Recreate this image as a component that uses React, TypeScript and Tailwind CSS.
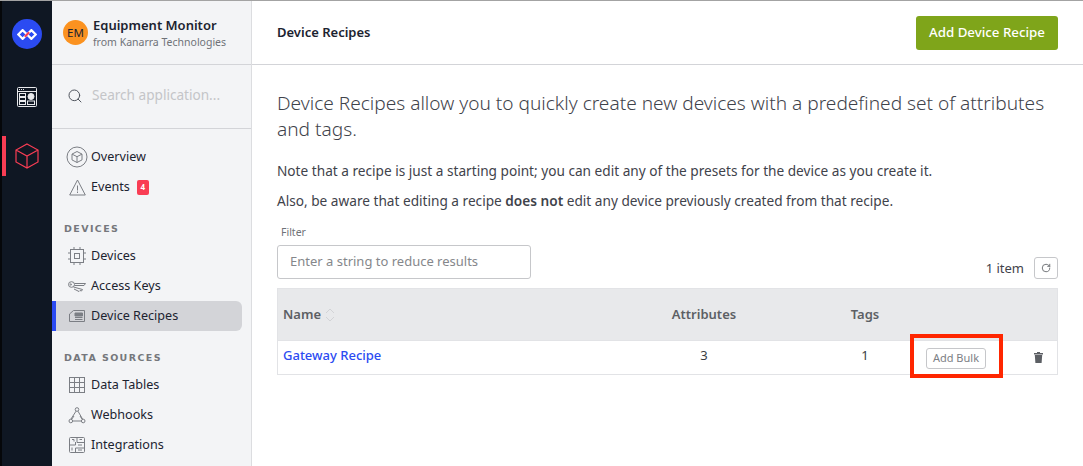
import { Search, RotateCw } from 'lucide-react'
import type { ReactNode } from 'react'

const FONT = "font-['Noto_Sans','Liberation_Sans',sans-serif]"
const ICON = '#7b7e84'

function IconOverview() {
  return (
    <svg width="22" height="22" viewBox="0 0 22 22" fill="none" stroke={ICON} strokeWidth="1">
      <circle cx="11" cy="11" r="10" />
      <path d="M11 5.500l5 2.600v5.800l-5 2.600-5-2.600V8.100zM6 8.100l5 2.600 5-2.600M11 10.700v5.800" />
    </svg>
  )
}

function IconEvents() {
  return (
    <svg width="17" height="17" viewBox="0 0 17 17" fill="none" stroke={ICON} strokeWidth="1">
      <path d="M8.500 1L.7 16h15.600z" />
      <path d="M8.500 6.500v5M8.500 12.500v1.500" />
    </svg>
  )
}

function IconDevices() {
  return (
    <svg width="18" height="18" viewBox="0 0 18 18" fill="none" stroke={ICON} strokeWidth="1">
      <rect x="2.500" y="2.500" width="13" height="13" />
      <rect x="6.500" y="6.500" width="5" height="5" />
      <path d="M6 0v2.500M12 0v2.500M6 15.500V18M12 15.500V18M0 6h2.500M0 12h2.500M15.500 6H18M15.500 12H18" />
    </svg>
  )
}

function IconKeys() {
  return (
    <svg width="18" height="11" viewBox="0 0 18 11" fill="none" stroke={ICON} strokeWidth="1">
      <ellipse cx="3.500" cy="3.500" rx="3" ry="2.800" />
      <path d="M6.500 2.500h11L16 4.500H6.500" />
      <path d="M5.500 6l9 2.500-1 1.500-1.500-.5-1 1-5-2.500" />
      <circle cx="2.800" cy="3.500" r=".7" />
    </svg>
  )
}

function IconRecipes() {
  return (
    <svg width="16" height="14" viewBox="0 0 16 14" fill="none" stroke={ICON} strokeWidth="1">
      <path d="M4.500 1.500h11v11H.5V5z" />
      <path d="M6 4h7.500v3H6z" fill={ICON} />
      <path d="M6 8.500h7.500M6 10.500h7.500" />
    </svg>
  )
}

function IconTables() {
  return (
    <svg width="16" height="16" viewBox="0 0 16 16" fill="none" stroke={ICON} strokeWidth="1">
      <rect x=".5" y=".5" width="15" height="15" />
      <path d="M.5 5.500h15M.5 10.500h15M5.500.5v15M10.500.5v15" />
    </svg>
  )
}

function IconWebhooks() {
  return (
    <svg width="18" height="17" viewBox="0 0 18 17" fill="none" stroke={ICON} strokeWidth="1">
      <circle cx="9" cy="2.500" r="1.800" />
      <circle cx="2.800" cy="14" r="1.800" />
      <circle cx="15.200" cy="14" r="1.800" />
      <path d="M8 4.200L3 12M10 4.200L14.500 12M4.600 14h8.800M6 9l-2.500 3.500M12 9l2 3" />
    </svg>
  )
}

function IconIntegrations() {
  return (
    <svg width="16" height="16" viewBox="0 0 16 16" fill="none" stroke={ICON} strokeWidth="1">
      <rect x=".5" y=".5" width="15" height="15" rx="1" />
      <path d="M.5 8h6V5M8 .5v5h7.500M6.500 15.500V11h9" />
      <path d="M3 2.500h2v2M10.500 2.500h2.500M3 10.500v3M9 8h4M9 13h4" />
    </svg>
  )
}

function NavItem({ icon, label, active, badge }: { icon: ReactNode; label: string; active?: boolean; badge?: string }) {
  return (
    <div className={`mr-[9px] flex h-[30px] items-center rounded-r-md border-l-4 pl-[8px] ${active ? 'border-[#2b4bf2] bg-[#d3d4d8]' : 'border-transparent'}`}>
      <span className="flex w-[26px] shrink-0 items-center justify-center">{icon}</span>
      <span className="ml-[1px] text-[12.600px] text-[#1c2330]">{label}</span>
      {badge && (
        <span className="ml-[7px] flex h-[15px] w-[12px] items-center justify-center rounded-[2px] bg-[#f93d54] text-[8px] font-bold text-white">
          {badge}
        </span>
      )}
    </div>
  )
}

function SectionLabel({ children }: { children: ReactNode }) {
  return (
    <div className="pl-[12px] font-['DejaVu_Sans',sans-serif] text-[9.500px] leading-[12px] font-bold tracking-[1.400px] whitespace-pre text-[#75777c]">
      {children}
    </div>
  )
}

function Rail() {
  return (
    <div className="flex w-[52px] shrink-0 flex-col items-center border-l-2 border-[#05070a] bg-[#0f1723]">
      <div className="mt-[18px] flex h-[30px] w-[30px] items-center justify-center rounded-full bg-[#2b4bf2]">
        <svg width="20" height="11" viewBox="0 0 18 10" fill="none" strokeWidth="2">
          <path d="M9 5L5 1 1 5l4 4 4-4" stroke="#fff" />
          <path d="M9 5l4 4 4-4-4-4-4 4" stroke="#fff" />
          <path d="M7 7l4-4" stroke="#f93d54" />
        </svg>
      </div>
      <div className="mt-[38px]">
        <svg width="20" height="20" viewBox="0 0 20 20" fill="none" stroke="#e8e9ec" strokeWidth="1">
          <rect x=".5" y=".5" width="19" height="19" rx="1" />
          <path d="M.5 4.500h19" />
          <path d="M2 2.500h1M4 2.500h1M6 2.500h1" />
          <rect x="2.500" y="6.500" width="6" height="3" />
          <rect x="2.500" y="10.500" width="6" height="3" />
          <rect x="2.500" y="14.500" width="6" height="3" />
          <circle cx="14" cy="9.500" r="3" fill="#e8e9ec" />
          <rect x="10.500" y="14" width="7" height="3.500" />
        </svg>
      </div>
      <div className="relative mt-[29px] flex h-[40px] w-full items-center justify-center">
        <span className="absolute top-0 left-0 h-[40px] w-[4px] bg-[#f93d54]" />
        <svg width="26" height="26" viewBox="0 0 26 26" fill="none" stroke="#f93d54" strokeWidth="1.200">
          <path d="M13 1l11 6v12l-11 6-11-6V7zM2 7l11 6 11-6M13 13v12" />
        </svg>
      </div>
    </div>
  )
}

function Sidebar() {
  return (
    <div className="flex w-[200px] shrink-0 flex-col border-r border-[#dcdde0] bg-[#f3f4f6]">
      <div className="flex h-[64px] shrink-0 items-center border-b border-[#d3d4d8] pl-[11px]">
        <span className="flex h-[25px] w-[25px] items-center justify-center rounded-full bg-[#fb9220] text-[11.500px] text-[#1c2330]">EM</span>
        <div className="ml-[5px]">
          <div className="text-[13px] leading-[17px] font-semibold text-[#1c2330]">Equipment Monitor</div>
          <div className="mt-[2px] text-[10.500px] leading-[13px] text-[#6f7278]">from Kanarra Technologies</div>
        </div>
      </div>
      <div className="flex h-[64px] shrink-0 items-center border-b border-[#d3d4d8] pb-[2px] pl-[15px]">
        <Search size={16} strokeWidth={1.500} className="text-[#50555e]" />
        <span className="ml-[9px] text-[13.600px] whitespace-nowrap text-[#c4c5c8]">Search application...</span>
      </div>
      <div className="pt-[13px]">
        <NavItem icon={<IconOverview />} label="Overview" />
        <NavItem icon={<IconEvents />} label="Events" badge="4" />
      </div>
      <div className="mt-[21px]"><SectionLabel>DEVICES</SectionLabel></div>
      <div className="mt-[6px]">
        <NavItem icon={<IconDevices />} label="Devices" />
        <NavItem icon={<IconKeys />} label="Access Keys" />
        <NavItem icon={<IconRecipes />} label="Device Recipes" active />
      </div>
      <div className="mt-[21px]"><SectionLabel>DATA SOURCES</SectionLabel></div>
      <div className="mt-[6px]">
        <NavItem icon={<IconTables />} label="Data Tables" />
        <NavItem icon={<IconWebhooks />} label="Webhooks" />
        <NavItem icon={<IconIntegrations />} label="Integrations" />
      </div>
    </div>
  )
}

function RecipeTable() {
  return (
    <div className="relative mt-[9px] border border-[#e2e3e6] text-[13px]">
      <div className="flex h-[51px] items-center bg-[#e8e9eb] font-semibold text-[#5c5f64]">
        <div className="flex w-[330px] items-center pl-[5px]">
          Name
          <svg className="ml-[4px]" width="10" height="14" viewBox="0 0 10 14" fill="none" stroke="#d2d3d6" strokeWidth="1">
            <path d="M1 5l4-4 4 4M1 9l4 4 4-4" />
          </svg>
        </div>
        <div className="w-[192px] text-center">Attributes</div>
        <div className="ml-[30px] w-[70px] text-center">Tags</div>
      </div>
      <div className="flex h-[34px] items-center border-t border-[#e2e3e6] bg-white pb-[4px] text-[#3a3d42]">
        <div className="w-[330px] pl-[5px] font-medium text-[#2b4bf2]">Gateway Recipe</div>
        <div className="w-[192px] text-center">3</div>
        <div className="ml-[30px] w-[70px] text-center">1</div>
        <div className="flex w-[112px] justify-center pt-[6px]">
          <span className="flex h-[21px] w-[60px] items-center justify-center rounded-[3px] border border-[#c6c7ca] text-[11px] text-[#7d8085]">Add Bulk</span>
        </div>
        <div className="flex flex-1 justify-center pt-[4px] pl-[8px]">
          <svg width="9" height="11" viewBox="0 0 9 11" fill="#5c5f64">
            <path d="M3 0h3v1h3v1.500H0V1h3zM.8 3h7.400L7.600 11H1.400z" />
          </svg>
        </div>
      </div>
      <div className="absolute top-[45px] left-[632px] h-[44px] w-[93px] border-[4px] border-[#ff2600]" />
    </div>
  )
}

export default function App() {
  return (
    <div className={`flex h-[466px] w-[1083px] overflow-hidden border-t border-[#a3a3a3] bg-white ${FONT}`}>
      <Rail />
      <Sidebar />
      <div className="flex min-w-0 flex-1 flex-col">
        <div className="flex h-[64px] shrink-0 items-center justify-between border-b border-[#d3d4d8] pr-[25px] pl-[25px]">
          <div className="text-[13px] font-semibold text-[#1c2330]">Device Recipes</div>
          <button className="h-[34px] w-[142px] rounded-[3px] bg-[#7fa51a] text-[13.300px] font-medium text-white">Add Device Recipe</button>
        </div>
        <div className="pr-[25px] pl-[25px]">
          <p className="mt-[25px] text-[19.100px] leading-[26px] font-light text-[#3f434b]">
            Device Recipes allow you to quickly create new devices with a predefined set of attributes and tags.
          </p>
          <p className="mt-[20px] text-[13.650px] leading-[18px] text-[#3f434b]">
            Note that a recipe is just a starting point; you can edit any of the presets for the device as you create it.
          </p>
          <p className="mt-[12px] text-[13.650px] leading-[18px] text-[#3f434b]">
            Also, be aware that editing a recipe <b className="font-semibold">does not</b> edit any device previously created from that recipe.
          </p>
          <div className="mt-[15px] pl-[4px] text-[10.500px] leading-[14px] text-[#6f7278]">Filter</div>
          <div className="mt-[6px] flex items-end justify-between">
            <div className="flex h-[34px] w-[254px] items-center rounded-[3px] border border-[#c6c7ca] pl-[12px] text-[13px] text-[#85878b]">
              Enter a string to reduce results
            </div>
            <div className="flex items-center">
              <span className="pt-[1px] text-[13px] text-[#3f434b]">1 item</span>
              <span className="ml-[10px] flex h-[22px] w-[24px] items-center justify-center rounded-[3px] border border-[#c6c7ca]">
                <RotateCw size={10} className="text-[#5c5f64]" />
              </span>
            </div>
          </div>
          <RecipeTable />
        </div>
      </div>
    </div>
  )
}
